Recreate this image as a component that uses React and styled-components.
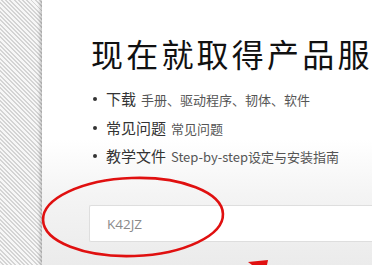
import React from "react";
import styled, { createGlobalStyle } from "styled-components";

const Global = createGlobalStyle`
  html, body { margin: 0; padding: 0; }
  body {
    width: 372px;
    height: 265px;
    overflow: hidden;
    font-family: "Noto Sans CJK SC", "Noto Sans", sans-serif;
    background: #fff;
  }
`;

const Page = styled.div`
  position: relative;
  display: flex;
  width: 372px;
  height: 265px;
  overflow: hidden;
`;

const Strip = styled.div`
  flex: 0 0 42px;
  background: repeating-linear-gradient(
    45deg,
    #f7f7f7 0px,
    #f7f7f7 1.6px,
    #d4d4d4 1.6px,
    #d4d4d4 3px
  );
`;

const Panel = styled.div`
  flex: 1;
  min-width: 0;
  background: linear-gradient(to bottom, #ffffff 0px, #ffffff 140px, #f4f4f4 195px, #ebebeb 265px);
  box-shadow: -2px 0 3px rgba(0, 0, 0, 0.22);
  padding: 33px 0 0 49px;
  position: relative;
  z-index: 1;
`;

const Title = styled.h1`
  margin: 0;
  font-weight: 400;
  font-size: 32px;
  line-height: 40px;
  letter-spacing: 3.2px;
  color: #111;
  white-space: nowrap;
`;

const List = styled.ul`
  list-style: none;
  margin: 15px 0 0 0;
  padding: 0;
  display: flex;
  flex-direction: column;
  gap: 6.5px;
`;

const Item = styled.li`
  display: flex;
  align-items: baseline;
  gap: 5px;
  height: 22px;
  line-height: 22px;
  padding-left: 15px;
  position: relative;
  white-space: nowrap;
  &::before {
    content: "";
    position: absolute;
    left: 2px;
    top: 9px;
    width: 4px;
    height: 4px;
    border-radius: 50%;
    background: #333;
  }
`;

const Main = styled.span`
  font-size: 15px;
  color: #333;
`;

const Sub = styled.span`
  font-size: 13px;
  color: #555;
`;

const InputBox = styled.div`
  margin-top: 38px;
  margin-left: -2px;
  height: 37px;
  box-sizing: border-box;
  border: 1px solid #dedede;
  border-right: none;
  border-radius: 2px 0 0 2px;
  background: #fff;
  display: flex;
  align-items: center;
  padding-left: 17px;
  font-family: "Open Sans", "Noto Sans", sans-serif;
  font-size: 13.5px;
  color: #8a8a8a;
`;

const Annotation = styled.svg`
  position: absolute;
  left: 0;
  top: 0;
  width: 372px;
  height: 265px;
  z-index: 2;
  pointer-events: none;
`;

export default function App() {
  return (
    <>
      <Global />
      <Page>
        <Strip />
        <Panel>
          <Title>现在就取得产品服务</Title>
          <List>
            <Item>
              <Main>下载</Main>
              <Sub>手册、驱动程序、韧体、软件</Sub>
            </Item>
            <Item>
              <Main>常见问题</Main>
              <Sub>常见问题</Sub>
            </Item>
            <Item>
              <Main>教学文件</Main>
              <Sub>Step-by-step设定与安装指南</Sub>
            </Item>
          </List>
          <InputBox>K42JZ</InputBox>
        </Panel>
        <Annotation viewBox="0 0 372 265">
          <ellipse
            cx="133"
            cy="217"
            rx="90"
            ry="39"
            transform="rotate(-2 133 217)"
            fill="none"
            stroke="#e01010"
            strokeWidth="2.6"
          />
          <path d="M248 262 L268 260 L267 265 L252 265 Z" fill="#e01010" />
        </Annotation>
      </Page>
    </>
  );
}
